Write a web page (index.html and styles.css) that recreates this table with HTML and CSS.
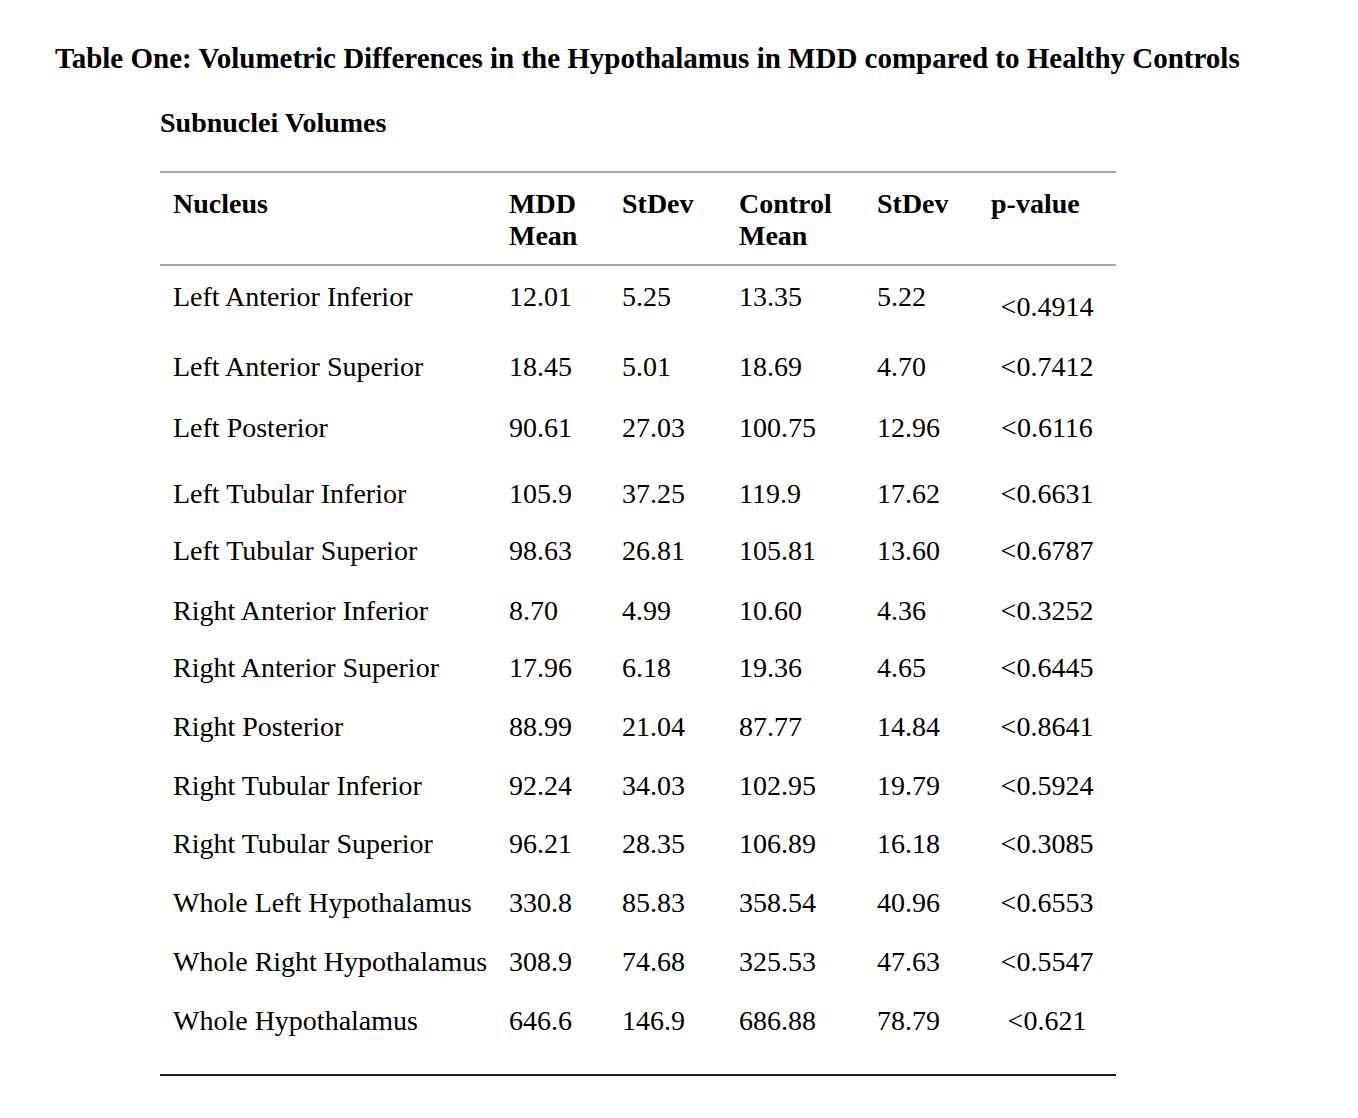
FILE: index.html
```html
<!DOCTYPE html>
<html>
<head>
<meta charset="utf-8">
<link rel="stylesheet" href="styles.css">
</head>
<body>
<h1 class="title">Table One: Volumetric Differences in the Hypothalamus in MDD compared to Healthy Controls</h1>
<h2 class="subtitle">Subnuclei Volumes</h2>
<div class="table">
  <div class="row head">
    <div class="cell">Nucleus</div>
    <div class="cell">MDD<br>Mean</div>
    <div class="cell">StDev</div>
    <div class="cell">Control<br>Mean</div>
    <div class="cell">StDev</div>
    <div class="cell">p-value</div>
  </div>
  <div class="body">
    <div class="row h70"><div class="cell">Left Anterior Inferior</div><div class="cell">12.01</div><div class="cell">5.25</div><div class="cell">13.35</div><div class="cell">5.22</div><div class="cell p low">&lt;0.4914</div></div>
    <div class="row h61"><div class="cell">Left Anterior Superior</div><div class="cell">18.45</div><div class="cell">5.01</div><div class="cell">18.69</div><div class="cell">4.70</div><div class="cell p">&lt;0.7412</div></div>
    <div class="row h66"><div class="cell">Left Posterior</div><div class="cell">90.61</div><div class="cell">27.03</div><div class="cell">100.75</div><div class="cell">12.96</div><div class="cell p">&lt;0.6116</div></div>
    <div class="row h57"><div class="cell">Left Tubular Inferior</div><div class="cell">105.9</div><div class="cell">37.25</div><div class="cell">119.9</div><div class="cell">17.62</div><div class="cell p">&lt;0.6631</div></div>
    <div class="row h60"><div class="cell">Left Tubular Superior</div><div class="cell">98.63</div><div class="cell">26.81</div><div class="cell">105.81</div><div class="cell">13.60</div><div class="cell p">&lt;0.6787</div></div>
    <div class="row h57"><div class="cell">Right Anterior Inferior</div><div class="cell">8.70</div><div class="cell">4.99</div><div class="cell">10.60</div><div class="cell">4.36</div><div class="cell p">&lt;0.3252</div></div>
    <div class="row h59"><div class="cell">Right Anterior Superior</div><div class="cell">17.96</div><div class="cell">6.18</div><div class="cell">19.36</div><div class="cell">4.65</div><div class="cell p">&lt;0.6445</div></div>
    <div class="row h59"><div class="cell">Right Posterior</div><div class="cell">88.99</div><div class="cell">21.04</div><div class="cell">87.77</div><div class="cell">14.84</div><div class="cell p">&lt;0.8641</div></div>
    <div class="row h58"><div class="cell">Right Tubular Inferior</div><div class="cell">92.24</div><div class="cell">34.03</div><div class="cell">102.95</div><div class="cell">19.79</div><div class="cell p">&lt;0.5924</div></div>
    <div class="row h59"><div class="cell">Right Tubular Superior</div><div class="cell">96.21</div><div class="cell">28.35</div><div class="cell">106.89</div><div class="cell">16.18</div><div class="cell p">&lt;0.3085</div></div>
    <div class="row h59"><div class="cell">Whole Left Hypothalamus</div><div class="cell">330.8</div><div class="cell">85.83</div><div class="cell">358.54</div><div class="cell">40.96</div><div class="cell p">&lt;0.6553</div></div>
    <div class="row h59"><div class="cell">Whole Right Hypothalamus</div><div class="cell">308.9</div><div class="cell">74.68</div><div class="cell">325.53</div><div class="cell">47.63</div><div class="cell p">&lt;0.5547</div></div>
    <div class="row h69"><div class="cell">Whole Hypothalamus</div><div class="cell">646.6</div><div class="cell">146.9</div><div class="cell">686.88</div><div class="cell">78.79</div><div class="cell p">&lt;0.621</div></div>
  </div>
</div>
</body>
</html>
```
FILE: styles.css
```css
html, body {
  margin: 0;
  padding: 0;
  background: #fff;
}
body {
  font-family: "Liberation Serif", "Times New Roman", serif;
  color: #000;
}
.title {
  margin: 0;
  padding: 42px 0 0 55px;
  font-size: 29px;
  font-weight: bold;
  line-height: 32px;
  white-space: nowrap;
}
.subtitle {
  margin: 0;
  padding: 33px 0 0 160px;
  font-size: 28px;
  font-weight: bold;
  line-height: 32px;
}
.table {
  margin: 32px 0 0 160px;
  width: 956px;
  border-top: 2px solid #a6a6a6;
  border-bottom: 2px solid #1a1a1a;
  font-size: 28px;
  line-height: 32px;
}
.row {
  display: grid;
  grid-template-columns: 336px 113px 117px 138px 114px 138px;
}
.cell {
  padding-left: 13px;
  white-space: nowrap;
}
.head {
  font-weight: bold;
  padding: 15px 0 12px;
  border-bottom: 2px solid #a6a6a6;
}
.body {
  padding-top: 15px;
}
.p {
  padding-left: 0;
  text-align: center;
}
.low { padding-top: 10px; }
.h70 { height: 70px; }
.h69 { height: 69px; }
.h66 { height: 66px; }
.h61 { height: 61px; }
.h60 { height: 60px; }
.h59 { height: 59px; }
.h58 { height: 58px; }
.h57 { height: 57px; }
```
